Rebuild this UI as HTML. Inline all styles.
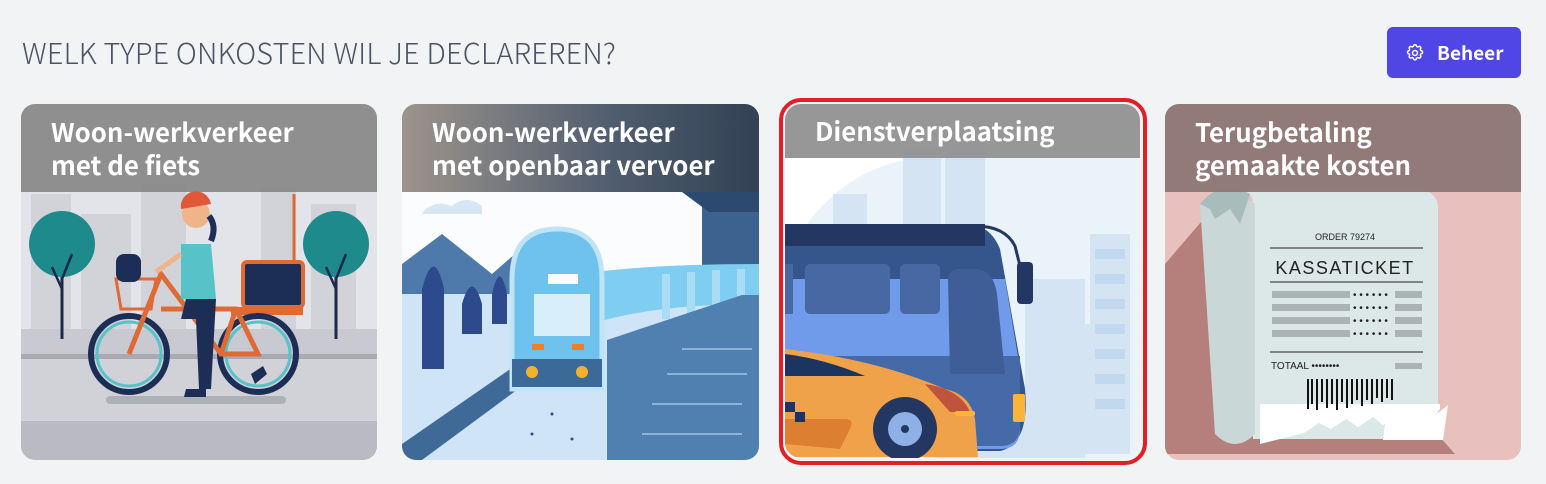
<!DOCTYPE html>
<html><head><meta charset="utf-8"><style>
*{margin:0;padding:0;box-sizing:border-box}
body{width:1546px;height:484px;background:#f2f3f5;position:relative;overflow:hidden;font-family:"Noto Sans CJK SC","Liberation Sans",sans-serif}
h1{position:absolute;left:22px;top:32px;font-weight:300;font-size:28.8px;color:#4b5263;letter-spacing:0.2px;white-space:nowrap}
.btn{position:absolute;left:1387px;top:27px;width:134px;height:51px;background:#4f46e5;border-radius:6px;color:#fff;font-weight:700;font-size:19px;display:flex;align-items:center;padding-left:18px}
.btn svg{margin-right:12px}
.card{position:absolute;top:104px;width:356px;height:356px;border-radius:14px;overflow:hidden}
.card svg.ill{position:absolute;left:0;top:0}
.hd{position:absolute;left:0;top:0;width:100%;padding:11px 30px 0;color:#fff;font-weight:700;font-size:25.8px;line-height:33px;white-space:nowrap}
.sel{position:absolute;left:779px;top:98px;width:368px;height:367px;border:4px solid #e41e26;border-radius:22px}
</style></head><body>
<h1>WELK TYPE ONKOSTEN WIL JE DECLAREREN?</h1>
<div class="btn"><svg width="20" height="20" viewBox="0 0 24 24" fill="none" stroke="#fff" stroke-width="1.8"><path d="M10.3 3.3c.4-1.7 2.9-1.7 3.4 0a1.7 1.7 0 0 0 2.6 1.1c1.5-.9 3.300.8 2.4 2.4a1.7 1.7 0 0 0 1 2.6c1.8.4 1.8 2.9 0 3.4a1.7 1.7 0 0 0-1 2.6c.9 1.5-.9 3.3-2.4 2.4a1.7 1.7 0 0 0-2.6 1c-.4 1.8-2.9 1.8-3.4 0a1.7 1.7 0 0 0-2.6-1c-1.5.9-3.3-.9-2.4-2.4a1.7 1.7 0 0 0-1-2.6c-1.7-.4-1.7-2.900 0-3.4a1.7 1.7 0 0 0 1-2.6c-.9-1.5.9-3.3 2.4-2.4a1.7 1.7 0 0 0 2.6-1.1z"/><circle cx="12" cy="12" r="3"/></svg>Beheer</div>

<div class="card" style="left:21px">
<svg class="ill" width="356" height="356" viewBox="0 0 356 356">
<rect width="356" height="356" fill="#e3e4e9"/>
<g fill="#d2d3d9"><rect x="10" y="90" width="40" height="140"/><rect x="60" y="110" width="50" height="120"/><rect x="120" y="80" width="45" height="150"/><rect x="240" y="85" width="35" height="145"/><rect x="290" y="100" width="45" height="130"/></g>
<rect y="225" width="356" height="30" fill="#c9cad1"/><rect y="250" width="356" height="5" fill="#a9aab3"/>
<rect y="255" width="356" height="62" fill="#d1d2d8"/><rect y="317" width="356" height="39" fill="#b9bac2"/>
<rect x="85" y="292" width="180" height="8" rx="4" fill="#aeb0b8"/>
<g><line x1="41" y1="150" x2="41" y2="235" stroke="#1b2a4a" stroke-width="3"/><circle cx="41" cy="140" r="33" fill="#1f8a8c"/><path d="M41 185 l-10 -22 M41 175 l10 -25" stroke="#1b2a4a" stroke-width="2.5" fill="none"/></g>
<g><line x1="315" y1="150" x2="315" y2="235" stroke="#1b2a4a" stroke-width="3"/><circle cx="315" cy="140" r="33" fill="#1f8a8c"/><path d="M315 185 l-10 -22 M315 175 l10 -25" stroke="#1b2a4a" stroke-width="2.5" fill="none"/></g>
<line x1="273" y1="90" x2="273" y2="180" stroke="#e06a35" stroke-width="3"/>
<rect x="222" y="158" width="60" height="45" rx="4" fill="#1c2e55" stroke="#e06a35" stroke-width="4"/>
<rect x="210" y="203" width="72" height="8" fill="#e06a35"/>
<circle cx="108" cy="250" r="38" fill="none" stroke="#1c2e55" stroke-width="6"/><circle cx="108" cy="250" r="32" fill="none" stroke="#57c2c7" stroke-width="3"/>
<circle cx="237" cy="250" r="38" fill="none" stroke="#1c2e55" stroke-width="6"/><circle cx="237" cy="250" r="32" fill="none" stroke="#57c2c7" stroke-width="3"/>
<path d="M108 250 L140 170 L200 250 L237 250 L215 205 L140 205 M200 250 L215 205" stroke="#e06a35" stroke-width="5" fill="none"/>
<path d="M95 175 l40 0 l-5 30 l-30 0z" fill="none" stroke="#e06a35" stroke-width="3"/>
<rect x="95" y="150" width="25" height="28" rx="8" fill="#1c2e55"/>
<path d="M160 140 l30 0 l5 55 l-35 0z" fill="#57c2c7"/><path d="M165 195 l30 0 l-5 90 l-12 0 l-3 -70 l-15 0z" fill="#1c2e55"/>
<circle cx="175" cy="110" r="14" fill="#f0b48a"/><path d="M160 105 a15 15 0 0 1 30 -5z" fill="#e0583a"/><path d="M188 112 q8 10 2 25" stroke="#1c2e55" stroke-width="6" fill="none"/>
<path d="M160 150 l-25 18" stroke="#f0b48a" stroke-width="5"/>
<path d="M165 285 l20 0 l0 8 l-22 0z M230 270 l12 -8 l4 8 l-12 10z" fill="#1c2e55"/>
</svg>
<div class="hd" style="background:rgba(128,128,128,.85);height:88px">Woon-werkverkeer<br>met de fiets</div>
</div>

<div class="card" style="left:402px;width:357px">
<svg class="ill" width="357" height="356" viewBox="0 0 357 356">
<rect width="357" height="356" fill="#fbfcfe"/>
<path d="M20 110 q10 -15 30 -8 q15 -12 30 0 l0 8z" fill="#d6e6f5"/>
<rect x="300" y="88" width="57" height="110" fill="#3c6290"/><path d="M280 88 l77 0 l0 20 l-50 0z" fill="#2c4a70"/>
<path d="M0 160 l40 -30 l50 40 l40 -35 l70 50 l0 100 l-200 0z" fill="#4e7aab"/>
<rect y="190" width="357" height="166" fill="#cfe5f7"/>
<path d="M130 180 q70 -20 227 -20 l0 40 q-150 0 -210 40z" fill="#7fcdf0"/>
<g fill="#a9dcf5"><rect x="260" y="170" width="8" height="45"/><rect x="285" y="168" width="8" height="45"/><rect x="310" y="166" width="8" height="45"/><rect x="335" y="165" width="8" height="45"/></g>
<path d="M20 185 q12 -45 22 0 l0 80 l-22 0z" fill="#2d4a8c"/><path d="M60 200 q10 -35 20 0 l0 30 l-20 0z" fill="#2d4a8c"/><path d="M90 190 q8 -35 15 0 l0 30 l-15 0z" fill="#2d4a8c"/>
<path d="M0 340 l130 -90 l20 10 l-130 96 l-20 0z" fill="#3f6a98"/>
<path d="M205 356 l0 -120 l135 -45 l17 0 l0 165z" fill="#5080b0"/>
<g stroke="#8cb4d8" stroke-width="2"><line x1="240" y1="330" x2="340" y2="330"/><line x1="250" y1="300" x2="340" y2="300"/><line x1="265" y1="270" x2="345" y2="270"/><line x1="280" y1="245" x2="350" y2="245"/></g>
<path d="M110 175 q0 -50 45 -50 q45 0 45 50 l0 110 l-90 0z" fill="#6fc2ee" stroke="#bfe4f8" stroke-width="5"/>
<rect x="132" y="190" width="56" height="42" fill="#d9eefb"/><rect x="146" y="170" width="30" height="10" fill="#fff"/>
<rect x="110" y="255" width="90" height="28" fill="#3c6a98"/>
<circle cx="130" cy="268" r="6" fill="#f5b02e"/><circle cx="180" cy="268" r="6" fill="#f5b02e"/>
<rect x="130" y="240" width="12" height="6" fill="#f57f20"/><rect x="170" y="240" width="12" height="6" fill="#f57f20"/>
<g fill="#2d4a8c"><circle cx="130" cy="330" r="1.5"/><circle cx="150" cy="310" r="1.5"/><circle cx="170" cy="335" r="1.5"/></g>
</svg>
<div class="hd" style="background:linear-gradient(90deg,rgba(140,130,120,.85),rgba(60,75,95,.9) 60%,rgba(40,55,75,.95));height:88px">Woon-werkverkeer<br>met openbaar vervoer</div>
</div>

<div class="card" style="left:785px;width:355px;height:354px;border-radius:16px">
<svg class="ill" width="355" height="354" viewBox="0 0 355 354">
<rect width="355" height="354" fill="#ffffff"/>
<path d="M0 354 l0 -200 q60 -110 170 -100 q60 -10 140 -15 l45 -15 l0 330z" fill="#eaf2fa"/>
<g fill="#d5e4f3"><rect x="118" y="45" width="38" height="120"/><rect x="160" y="30" width="40" height="130"/><rect x="48" y="90" width="34" height="60"/><rect x="305" y="130" width="40" height="220"/><rect x="240" y="175" width="60" height="180"/><rect x="260" y="220" width="60" height="130"/><rect x="150" y="280" width="130" height="74"/></g>
<g fill="#c2d8ee"><rect x="310" y="145" width="30" height="10"/><rect x="310" y="170" width="30" height="10"/><rect x="310" y="195" width="30" height="10"/><rect x="310" y="220" width="30" height="10"/><rect x="310" y="245" width="30" height="10"/><rect x="310" y="270" width="30" height="10"/><rect x="310" y="295" width="30" height="10"/></g>
<path d="M0 120 l180 0 q25 0 35 25 l25 140 q5 55 -25 62 l-215 0z" fill="#34568c"/>
<rect x="0" y="120" width="200" height="22" fill="#233762"/>
<path d="M0 175 l220 0 l15 90 l0 60 q0 20 -20 20 l-215 0z" fill="#6f9bea"/>
<path d="M0 252 l235 0 l0 70 q0 20 -20 20 l-215 0z" fill="#466aa8"/>
<rect x="20" y="160" width="85" height="50" rx="5" fill="#4868a4"/><rect x="115" y="160" width="40" height="50" rx="5" fill="#4868a4"/><rect x="0" y="160" width="8" height="50" fill="#4868a4"/>
<path d="M163 175 q0 -10 12 -10 l15 0 q18 0 22 25 l8 80 l-55 0z" fill="#3f5e97"/>
<path d="M190 122 q30 0 40 20 l5 20" stroke="#233762" stroke-width="3" fill="none"/>
<rect x="232" y="158" width="16" height="42" rx="4" fill="#233762"/>
<rect x="228" y="290" width="12" height="28" rx="2" fill="#fbb438"/>
<path d="M0 245 q90 10 160 40 q25 5 30 30 l3 38 l-193 0z" fill="#f0a24b"/>
<path d="M0 250 q40 5 80 22 l-80 0z" fill="#1a3560"/>
<path d="M140 280 q35 5 45 28 l-20 0z" fill="#c0543a"/>
<path d="M0 315 l60 0 q10 0 5 10 l-10 20 l-55 -5z" fill="#dd7f30"/>
<rect x="0" y="298" width="10" height="10" fill="#1a3560"/><rect x="10" y="308" width="10" height="10" fill="#1a3560"/>
<circle cx="120" cy="325" r="32" fill="#233762"/><circle cx="120" cy="325" r="17" fill="#8fb0e6"/><circle cx="120" cy="325" r="4" fill="#233762"/>
<rect x="170" y="307" width="20" height="5" rx="2" fill="#fbb438"/>
</svg>
<div class="hd" style="background:rgba(145,145,145,.95);height:54px;padding-top:10px">Dienstverplaatsing</div>
</div>
<div class="sel"></div>

<div class="card" style="left:1165px">
<svg class="ill" width="356" height="356" viewBox="0 0 356 356">
<rect width="356" height="356" fill="#e8c1bf"/>
<path d="M0 160 l60 -70 l0 0 l230 260 l-290 0z" fill="#b5807c"/>
<path d="M88 100 q0 -15 -20 -15 l180 0 q25 0 25 20 l0 230 l-185 0z" fill="#dce8e8"/>
<path d="M35 100 q30 -20 55 0 l0 230 q-20 20 -40 0z" fill="#c9d7d7"/>
<path d="M35 100 q20 -25 50 -10 l-10 30 l-10 -15 l-15 10 l-5 -10z" fill="#a7bcbb"/>
<path d="M95 340 l0 -40 l180 0 l0 5 l-10 12 l-10 -8 l-12 10 l-10 -8 l-15 10 l-10 -8 l-15 10 l-12 -8 l-15 10 l-12 -6 l-15 10 z" fill="#ffffff"/>
<path d="M220 320 l12 -15 l12 10 l12 -12 l12 10 l15 -12 l-5 35 l-60 0z" fill="#fff"/>
<text x="180" y="136" text-anchor="middle" font-family="Liberation Sans,sans-serif" font-size="9" fill="#222">ORDER 79274</text>
<line x1="105" y1="144" x2="258" y2="144" stroke="#222"/>
<text x="180" y="170" text-anchor="middle" font-family="Liberation Sans,sans-serif" font-size="18" letter-spacing="1.5" fill="#222">KASSATICKET</text>
<line x1="105" y1="178" x2="258" y2="178" stroke="#222"/>
<g fill="#aab4b4"><rect x="107" y="187" width="78" height="7"/><rect x="107" y="200" width="78" height="7"/><rect x="107" y="213" width="78" height="7"/><rect x="107" y="226" width="78" height="7"/><rect x="230" y="187" width="27" height="7"/><rect x="230" y="200" width="27" height="7"/><rect x="230" y="213" width="27" height="7"/><rect x="230" y="226" width="27" height="7"/><rect x="230" y="259" width="27" height="6"/></g>
<g fill="#222" font-family="Liberation Sans,sans-serif" font-size="10"><text x="188" y="194">• • • • • •</text><text x="188" y="207">• • • • • •</text><text x="188" y="220">• • • • • •</text><text x="188" y="233">• • • • • •</text></g>
<line x1="105" y1="248" x2="258" y2="248" stroke="#222"/>
<text x="106" y="265" font-family="Liberation Sans,sans-serif" font-size="10" fill="#222">TOTAAL ••••••••</text>
<g stroke="#111" stroke-width="2"><line x1="143" y1="275" x2="143" y2="305"/><line x1="147" y1="275" x2="147" y2="300"/><line x1="152" y1="275" x2="152" y2="306"/><line x1="157" y1="275" x2="157" y2="298"/><line x1="162" y1="275" x2="162" y2="304"/><line x1="167" y1="275" x2="167" y2="300"/><line x1="172" y1="275" x2="172" y2="306"/><line x1="177" y1="275" x2="177" y2="298"/><line x1="182" y1="275" x2="182" y2="304"/><line x1="187" y1="275" x2="187" y2="300"/><line x1="192" y1="275" x2="192" y2="296"/><line x1="197" y1="275" x2="197" y2="302"/><line x1="202" y1="275" x2="202" y2="296"/><line x1="207" y1="275" x2="207" y2="300"/><line x1="212" y1="275" x2="212" y2="294"/><line x1="217" y1="275" x2="217" y2="298"/><line x1="222" y1="275" x2="222" y2="294"/><line x1="227" y1="275" x2="227" y2="296"/></g>
</svg>
<div class="hd" style="background:rgba(140,118,115,.95);height:88px">Terugbetaling<br>gemaakte kosten</div>
</div>
</body></html>
